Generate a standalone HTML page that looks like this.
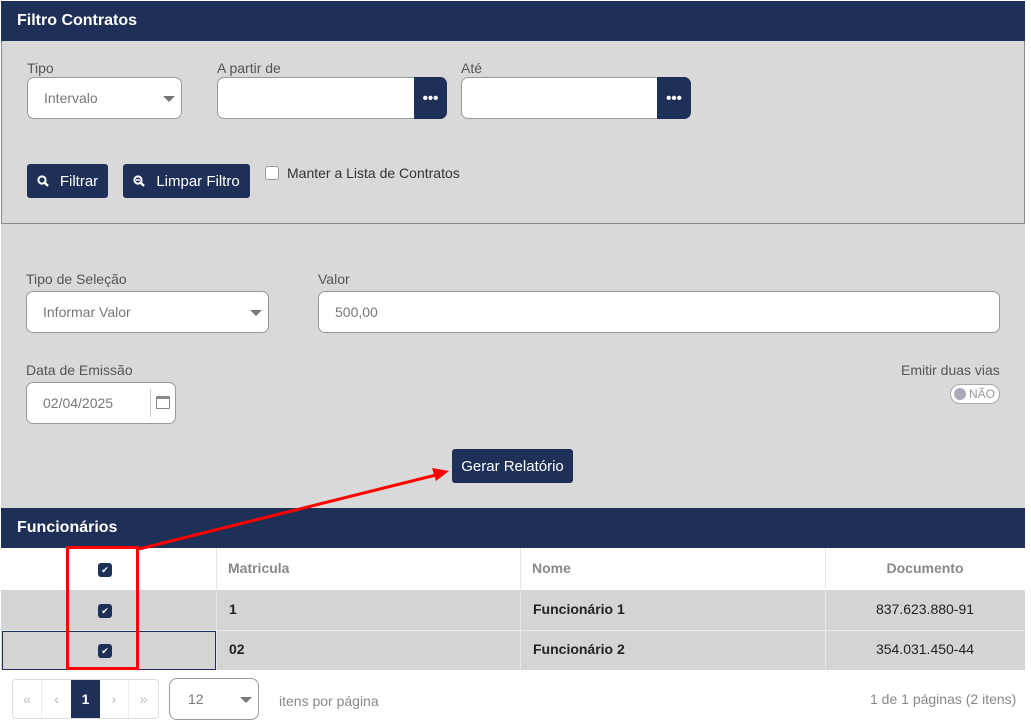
<!DOCTYPE html>
<html><head><meta charset="utf-8"><style>
*{box-sizing:border-box;margin:0;padding:0}
body{width:1031px;height:728px;background:#fff;font-family:"Liberation Sans",sans-serif;position:relative;overflow:hidden;color:#333}
.a{position:absolute}
.hdr{background:#1f3058;color:#fff;font-weight:bold;font-size:16px;padding-left:16px;display:flex;align-items:center}
.lbl{font-size:14px;color:#555}
.inp{background:#fff;border:1px solid #999;border-radius:7px;font-size:14px;color:#777;display:flex;align-items:center;padding-left:16px}
.btn{background:#1f3058;color:#fff;border-radius:3px;font-size:15px;display:flex;align-items:center;justify-content:center}
.caret{position:absolute;right:6px;top:18px;width:0;height:0;border-left:6px solid transparent;border-right:6px solid transparent;border-top:6px solid #777}
.cb{width:14px;height:14px;background:#1f3058;border-radius:3px;color:#fff;font-size:9px;display:flex;align-items:center;justify-content:center}
.td{font-size:14px;font-weight:bold;color:#222;display:flex;align-items:center}
.th{font-size:14px;font-weight:bold;color:#888;display:flex;align-items:center}
</style></head><body>
<div class="a" style="left:1px;top:1px;width:1024px;height:546px;background:#d9d9d9"></div>
<div class="a hdr" style="left:1px;top:1px;width:1024px;height:40px">Filtro Contratos</div>
<div class="a" style="left:1px;top:41px;width:1024px;height:183px;border:1px solid #888;border-top:none"></div>
<div class="a lbl" style="left:27px;top:60px">Tipo</div>
<div class="a inp" style="left:27px;top:77px;width:155px;height:42px">Intervalo<div class="caret"></div></div>
<div class="a lbl" style="left:217px;top:60px">A partir de</div>
<div class="a inp" style="left:217px;top:77px;width:230px;height:42px"></div>
<div class="a btn" style="left:414px;top:77px;width:33px;height:42px;border-radius:0 7px 7px 0;font-weight:bold">•••</div>
<div class="a lbl" style="left:461px;top:60px">Até</div>
<div class="a inp" style="left:461px;top:77px;width:230px;height:42px"></div>
<div class="a btn" style="left:657px;top:77px;width:34px;height:42px;border-radius:0 7px 7px 0;font-weight:bold">•••</div>
<div class="a btn" style="left:27px;top:164px;width:81px;height:34px"><svg width="12" height="12" style="margin-right:11px"><circle cx="5" cy="5" r="3.6" fill="none" stroke="#fff" stroke-width="2"/><line x1="7.5" y1="7.5" x2="11" y2="11" stroke="#fff" stroke-width="2.4"/></svg>Filtrar</div>
<div class="a btn" style="left:123px;top:164px;width:127px;height:34px"><svg width="12" height="12" style="margin-right:11px"><circle cx="5" cy="5" r="3.6" fill="none" stroke="#fff" stroke-width="2"/><line x1="3" y1="5" x2="7" y2="5" stroke="#fff" stroke-width="1.5"/><line x1="7.5" y1="7.5" x2="11" y2="11" stroke="#fff" stroke-width="2.4"/></svg>Limpar Filtro</div>
<div class="a" style="left:265px;top:166px;width:14px;height:14px;background:#fff;border:1px solid #999;border-radius:3px"></div>
<div class="a" style="left:287px;top:165px;font-size:14px;color:#333">Manter a Lista de Contratos</div>

<div class="a lbl" style="left:26px;top:271px">Tipo de Seleção</div>
<div class="a inp" style="left:26px;top:291px;width:243px;height:42px">Informar Valor<div class="caret"></div></div>
<div class="a lbl" style="left:318px;top:271px">Valor</div>
<div class="a inp" style="left:318px;top:291px;width:682px;height:42px">500,00</div>
<div class="a lbl" style="left:26px;top:362px">Data de Emissão</div>
<div class="a inp" style="left:26px;top:382px;width:150px;height:42px">02/04/2025
<div class="a" style="left:123px;top:6px;width:1px;height:28px;background:#ccc"></div>
<div class="a" style="left:129px;top:13px;width:14px;height:13px;border:1.5px solid #888;border-top-width:3px;border-radius:1px"></div></div>
<div class="a lbl" style="left:901px;top:362px">Emitir duas vias</div>
<div class="a" style="left:950px;top:384px;width:50px;height:20px;border:1px solid #aaa;border-radius:10px;background:#fff;font-size:12px;color:#999;padding-left:18px;line-height:18px">NÃO<div class="a" style="left:3px;top:3px;width:12px;height:12px;border-radius:50%;background:#aab"></div></div>
<div class="a btn" style="left:452px;top:449px;width:121px;height:34px">Gerar Relatório</div>

<div class="a hdr" style="left:1px;top:508px;width:1024px;height:40px">Funcionários</div>
<div class="a" style="left:1px;top:548px;width:1024px;height:42px;background:#fff"></div>
<div class="a" style="left:1px;top:590px;width:1024px;height:80px;background:#d4d4d4"></div>
<div class="a" style="left:1px;top:630px;width:1024px;height:1px;background:#e8e8e8"></div>
<div class="a" style="left:2px;top:631px;width:214px;height:39px;border:1px solid #1f3058"></div>
<div class="a" style="left:216px;top:548px;width:1px;height:122px;background:#e6e6e6"></div>
<div class="a" style="left:520px;top:548px;width:1px;height:122px;background:#e6e6e6"></div>
<div class="a" style="left:825px;top:548px;width:1px;height:122px;background:#e6e6e6"></div>
<div class="a cb" style="left:98px;top:563px">✔</div>
<div class="a cb" style="left:98px;top:604px">✔</div>
<div class="a cb" style="left:98px;top:644px">✔</div>
<div class="a th" style="left:228px;top:548px;height:40px">Matricula</div>
<div class="a th" style="left:532px;top:548px;height:40px">Nome</div>
<div class="a th" style="left:825px;top:548px;width:200px;height:40px;justify-content:center">Documento</div>
<div class="a td" style="left:229px;top:590px;height:38px">1</div>
<div class="a td" style="left:533px;top:590px;height:38px">Funcionário 1</div>
<div class="a td" style="left:825px;top:590px;width:200px;height:38px;justify-content:center;font-weight:normal">837.623.880-91</div>
<div class="a td" style="left:229px;top:630px;height:38px">02</div>
<div class="a td" style="left:533px;top:630px;height:38px">Funcionário 2</div>
<div class="a td" style="left:825px;top:630px;width:200px;height:38px;justify-content:center;font-weight:normal">354.031.450-44</div>

<div class="a" style="left:12px;top:679px;width:147px;height:40px;border:1px solid #ddd;border-radius:4px;display:flex;font-size:14px;color:#bbb;overflow:hidden">
<div style="width:29px;display:flex;align-items:center;justify-content:center;border-right:1px solid #eee">«</div>
<div style="width:29px;display:flex;align-items:center;justify-content:center">‹</div>
<div style="width:29px;display:flex;align-items:center;justify-content:center;background:#1f3058;color:#fff;font-weight:bold">1</div>
<div style="width:29px;display:flex;align-items:center;justify-content:center;border-right:1px solid #eee">›</div>
<div style="width:29px;display:flex;align-items:center;justify-content:center">»</div></div>
<div class="a inp" style="left:169px;top:678px;width:90px;height:42px;border-radius:8px;padding-left:18px">12<div class="caret"></div></div>
<div class="a" style="left:279px;top:693px;font-size:14px;color:#888">itens por página</div>
<div class="a" style="left:870px;top:691px;font-size:14px;color:#888">1 de 1 páginas (2 itens)</div>

<div class="a" style="left:66px;top:546px;width:73px;height:124px;border:3px solid #f00"></div>
<svg class="a" style="left:0;top:0" width="1031" height="728"><line x1="139" y1="549" x2="440" y2="474" stroke="#f00" stroke-width="3"/><polygon points="449,471 432,468 436,481" fill="#f00"/></svg>
</body></html>
